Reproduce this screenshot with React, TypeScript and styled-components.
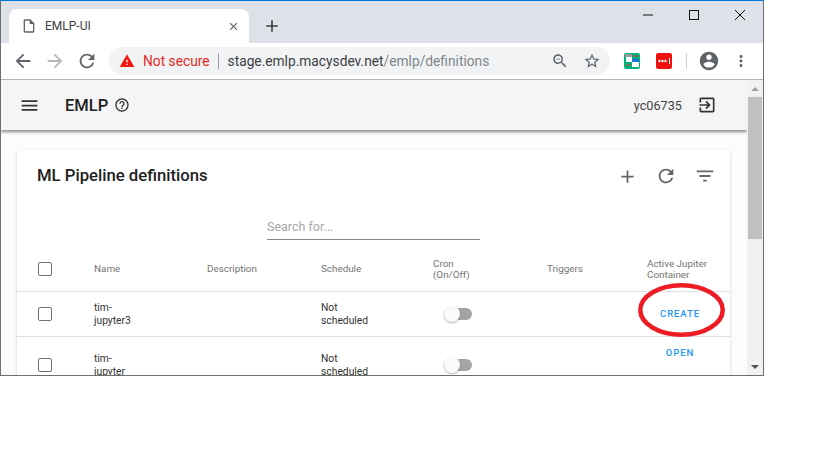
import * as React from 'react';
import styled, { createGlobalStyle } from 'styled-components';

const GlobalStyle = createGlobalStyle`
    html, body {
        margin: 0;
        padding: 0;
        background: #ffffff;
        font-family: Roboto, "Liberation Sans", sans-serif;
    }
`;

const Window = styled.div`
    width: 764px;
    height: 376px;
    box-sizing: border-box;
    display: flex;
    flex-direction: column;
    overflow: hidden;
    border-top: 1px solid #0078d7;
    border-left: 1px solid #6e6e6e;
    border-right: 1px solid #6e6e6e;
    border-bottom: 1px solid #6e6e6e;
`;

const TabStrip = styled.div`
    height: 42px;
    flex: none;
    display: flex;
    align-items: flex-end;
    background: #dee1e7;
    padding-left: 8px;
`;

const Tab = styled.div`
    width: 240px;
    height: 34px;
    box-sizing: border-box;
    display: flex;
    align-items: center;
    padding: 0 9px 0 12px;
    background: #ffffff;
    border-radius: 8px 8px 0 0;
`;

const TabTitle = styled.span`
    flex: 1;
    margin-left: 8px;
    font-size: 12px;
    color: #3c4043;
`;

const NewTab = styled.div`
    display: flex;
    height: 34px;
    align-items: center;
    margin-left: 13px;
`;

const WindowControls = styled.div`
    margin-left: auto;
    height: 100%;
    display: flex;
    align-items: flex-start;
    gap: 26px;
    padding: 5px 13px 0 0;
    box-sizing: border-box;
`;

const Toolbar = styled.div`
    height: 36px;
    flex: none;
    display: flex;
    align-items: center;
    background: #ffffff;
    border-bottom: 1px solid #b4b4b4;
    box-sizing: content-box;
    padding-left: 11px;
`;

const NavButtons = styled.div`
    display: flex;
    align-items: center;
    gap: 10px;
`;

const Omnibox = styled.div`
    width: 501px;
    height: 28px;
    margin-left: 11px;
    box-sizing: border-box;
    display: flex;
    align-items: center;
    padding: 0 9px 0 10px;
    border-radius: 14px;
    background: #f1f3f4;
    font-size: 13.75px;
`;

const NotSecure = styled.span`
    margin-left: 8px;
    color: #e8281f;
`;

const OmniDivider = styled.span`
    width: 1px;
    height: 16px;
    margin: 0 9px 0 8px;
    background: #9aa0a6;
`;

const UrlHost = styled.span`
    color: #3c4043;
`;

const UrlPath = styled.span`
    flex: 1;
    color: #80868b;
`;

const OmniActions = styled.div`
    display: flex;
    align-items: center;
    gap: 14px;
`;

const Extensions = styled.div`
    display: flex;
    align-items: center;
    margin-left: 14px;
    gap: 16px;
`;

const ExtensionBadge = styled.div<{ $bg: string }>`
    width: 16px;
    height: 16px;
    border-radius: 2px;
    background: ${p => p.$bg};
    display: flex;
`;

const ToolbarDivider = styled.span`
    width: 1px;
    height: 16px;
    margin: 0 11px 0 14px;
    background: #d0d0d0;
`;

const MoreSlot = styled.div`
    display: flex;
    margin-left: 12px;
`;

const Body = styled.div`
    flex: 1;
    min-height: 0;
    display: flex;
`;

const Main = styled.div`
    flex: 1;
    min-width: 0;
    overflow: hidden;
    background: #fcfcfc;
`;

const AppBar = styled.div`
    height: 50px;
    display: flex;
    align-items: center;
    padding: 0 30px 0 18px;
    background: #f5f5f5;
    box-shadow: 0 2px 3px rgba(0, 0, 0, 0.45);
`;

const AppTitle = styled.span`
    margin-left: 25px;
    font-size: 16.5px;
    font-weight: 500;
    color: #212121;
`;

const HelpSlot = styled.span`
    display: flex;
    margin-left: 6px;
`;

const UserName = styled.span`
    margin-left: auto;
    margin-right: 15px;
    font-size: 12.7px;
    color: #424242;
`;

const Card = styled.div`
    margin: 20px 17px 0 16px;
    background: #ffffff;
    border-radius: 3px;
    box-shadow: 0 1px 3px rgba(0, 0, 0, 0.2);
`;

const CardHeader = styled.div`
    height: 52px;
    display: flex;
    align-items: center;
    padding: 0 14px 0 20px;
    box-sizing: border-box;
`;

const CardTitle = styled.h2`
    margin: 0 0 1px 0;
    flex: 1;
    font-size: 16.7px;
    font-weight: 500;
    color: #212121;
`;

const CardActions = styled.div`
    display: flex;
    align-items: center;
    gap: 17px;
`;

const SearchRow = styled.div`
    display: flex;
    justify-content: center;
    padding: 13px 0 6px 0;
`;

const SearchInput = styled.input`
    width: 213px;
    height: 25px;
    box-sizing: border-box;
    padding: 0 0 2px 0;
    border: none;
    border-bottom: 1px solid #8a8a8a;
    background: transparent;
    outline: none;
    font-family: inherit;
    font-size: 12.5px;
    color: #333333;
    &::placeholder {
        color: #a8a8a8;
        opacity: 1;
    }
`;

const Row = styled.div<{ $height: number }>`
    height: ${p => p.$height}px;
    box-sizing: border-box;
    display: grid;
    grid-template-columns: 77px 113px 114px 112px 114px 100px 83px;
    align-items: center;
    border-bottom: 1px solid #e0e0e0;
    font-size: 10.3px;
    line-height: 13px;
`;

const HeadCell = styled.div`
    color: #757575;
    font-size: 9.85px;
    line-height: 11px;
`;

const Cell = styled.div`
    color: #333333;
`;

const CheckCell = styled.div`
    padding-left: 21px;
    display: flex;
`;

const CheckBox = styled.span`
    width: 14px;
    height: 14px;
    box-sizing: border-box;
    display: block;
    border: 1.5px solid #6f6f6f;
    border-radius: 2px;
`;

const ToggleCell = styled.div`
    padding-left: 11px;
    display: flex;
`;

const Track = styled.span`
    width: 28px;
    height: 12px;
    position: relative;
    display: block;
    border-radius: 6px;
    background: #a4a4a4;
`;

const Thumb = styled.span`
    position: absolute;
    left: 0;
    top: -2px;
    width: 16px;
    height: 16px;
    border-radius: 50%;
    background: #fafafa;
    box-shadow: 0 1px 2px rgba(0, 0, 0, 0.3);
`;

const ActionCell = styled.div<{ $top: boolean }>`
    position: relative;
    align-self: ${p => (p.$top ? 'start' : 'center')};
    margin-top: ${p => (p.$top ? '9px' : '-1px')};
    text-align: center;
    padding-right: 17px;
`;

const ActionButton = styled.span`
    font-size: 9.5px;
    font-weight: 500;
    letter-spacing: 0.9px;
    color: #2196f3;
`;

const Scribble = styled.svg`
    position: absolute;
    left: -9px;
    top: -24px;
`;

const Scrollbar = styled.div`
    width: 16px;
    flex: none;
    display: flex;
    flex-direction: column;
    align-items: center;
    background: #f1f1f1;
`;

const ScrollArrow = styled.div<{ $down?: boolean }>`
    height: 17px;
    display: flex;
    align-items: center;
    justify-content: center;
    margin-top: ${p => (p.$down ? 'auto' : '0')};
`;

const Arrow = styled.span<{ $down?: boolean }>`
    width: 0;
    height: 0;
    border-left: 4px solid transparent;
    border-right: 4px solid transparent;
    border-${p => (p.$down ? 'top' : 'bottom')}: 4px solid ${p => (p.$down ? '#505050' : '#a3a3a3')};
`;

const ScrollThumb = styled.div`
    width: 14px;
    height: 142px;
    background: #c1c1c1;
`;

const Icon = function (props: { d: string; size: number; color: string })
{
    return (
        <svg width={props.size} height={props.size} viewBox="0 0 24 24" fill={props.color} style={{ display: 'block', flex: 'none' }}>
            <path d={props.d} />
        </svg>
    );
};

const paths = {
    back: 'M20 11H7.83l5.59-5.59L12 4l-8 8 8 8 1.41-1.41L7.83 13H20v-2z',
    forward: 'M12 4l-1.41 1.41L16.17 11H4v2h12.17l-5.58 5.59L12 20l8-8z',
    refresh: 'M17.65 6.35C16.2 4.9 14.21 4 12 4c-4.42 0-7.99 3.58-7.99 8s3.57 8 7.99 8c3.73 0 6.84-2.55 7.73-6h-2.08c-.82 2.33-3.04 4-5.65 4-3.31 0-6-2.69-6-6s2.69-6 6-6c1.66 0 3.14.69 4.22 1.78L13 11h7V4l-2.35 2.35z',
    file: 'M14 2H6c-1.1 0-2 .9-2 2v16c0 1.1.9 2 2 2h12c1.1 0 2-.9 2-2V8l-6-6zm4 18H6V4h7v5h5v11z',
    close: 'M19 6.41L17.59 5 12 10.59 6.41 5 5 6.41 10.59 12 5 17.59 6.41 19 12 13.41 17.59 19 19 17.59 13.41 12z',
    add: 'M19 13h-6v6h-2v-6H5v-2h6V5h2v6h6v2z',
    zoomOut: 'M15.5 14h-.79l-.28-.27C15.41 12.59 16 11.11 16 9.5 16 5.91 13.09 3 9.5 3S3 5.91 3 9.5 5.91 16 9.5 16c1.61 0 3.09-.59 4.23-1.57l.27.28v.79l5 4.99L20.49 19l-4.99-5zm-6 0C7.01 14 5 11.99 5 9.5S7.01 5 9.5 5 14 7.01 14 9.5 11.99 14 9.5 14zM7 9h5v1H7z',
    star: 'M22 9.24l-7.19-.62L12 2 9.19 8.63 2 9.24l5.46 4.73L5.82 21 12 17.27 18.18 21l-1.63-7.03L22 9.24zM12 15.4l-3.76 2.27 1-4.28-3.32-2.88 4.38-.38L12 6.1l1.71 4.04 4.38.38-3.32 2.88 1 4.28L12 15.4z',
    account: 'M12 2C6.48 2 2 6.48 2 12s4.48 10 10 10 10-4.48 10-10S17.52 2 12 2zm0 3c1.66 0 3 1.34 3 3s-1.34 3-3 3-3-1.34-3-3 1.34-3 3-3zm0 14.2c-2.5 0-4.71-1.28-6-3.22.03-1.99 4-3.08 6-3.08 1.99 0 5.97 1.09 6 3.08-1.29 1.94-3.5 3.22-6 3.22z',
    more: 'M12 8c1.1 0 2-.9 2-2s-.9-2-2-2-2 .9-2 2 .9 2 2 2zm0 2c-1.1 0-2 .9-2 2s.9 2 2 2 2-.9 2-2-.9-2-2-2zm0 6c-1.1 0-2 .9-2 2s.9 2 2 2 2-.9 2-2-.9-2-2-2z',
    menu: 'M3 18h18v-2H3v2zm0-5h18v-2H3v2zm0-7v2h18V6H3z',
    help: 'M11 18h2v-2h-2v2zm1-16C6.48 2 2 6.48 2 12s4.48 10 10 10 10-4.48 10-10S17.52 2 12 2zm0 18c-4.41 0-8-3.59-8-8s3.59-8 8-8 8 3.59 8 8-3.59 8-8 8zm0-14c-2.21 0-4 1.79-4 4h2c0-1.1.9-2 2-2s2 .9 2 2c0 2-3 1.75-3 5h2c0-2.25 3-2.5 3-5 0-2.21-1.79-4-4-4z',
    exit: 'M10.09 15.59L11.5 17l5-5-5-5-1.41 1.41L12.67 11H3v2h9.67l-2.58 2.59zM19 3H5c-1.11 0-2 .9-2 2v4h2V5h14v14H5v-4H3v4c0 1.1.89 2 2 2h14c1.1 0 2-.9 2-2V5c0-1.1-.9-2-2-2z',
    filter: 'M10 18h4v-2h-4v2zM3 6v2h18V6H3zm3 7h12v-2H6v2z',
};

const WarningIcon = function ()
{
    return (
        <svg width="16" height="16" viewBox="0 0 24 24" style={{ display: 'block', flex: 'none' }}>
            <path d="M1 21h22L12 2 1 21z" fill="#f0190f" />
            <path d="M13 18h-2v-2h2v2zm0-4h-2v-4h2v4z" fill="#ffffff" />
        </svg>
    );
};

const SwitchExtension = function ()
{
    return (
        <svg width="16" height="16" viewBox="0 0 16 16" style={{ display: 'block' }}>
            <rect x="1" y="1" width="7" height="3" fill="#9e9e9e" />
            <rect x="2" y="4" width="6" height="5" fill="#ffffff" />
            <rect x="8" y="6" width="7" height="3" fill="#1976d2" />
            <rect x="8" y="9" width="7" height="5" fill="#ffffff" />
            <path d="M9 3h5M2 12h5" stroke="#e53935" strokeWidth="1" />
        </svg>
    );
};

const DotsExtension = function ()
{
    return (
        <svg width="16" height="16" viewBox="0 0 16 16" style={{ display: 'block' }}>
            <circle cx="3.5" cy="8" r="1.2" fill="#ffffff" />
            <circle cx="6.5" cy="8" r="1.2" fill="#ffffff" />
            <circle cx="9.5" cy="8" r="1.2" fill="#ffffff" />
            <rect x="13" y="5" width="1" height="6" fill="#ffffff" />
        </svg>
    );
};

const rows = [
    { name: ['tim-', 'jupyter3'], action: 'CREATE', height: 45, circled: true },
    { name: ['tim-', 'jupyter'], action: 'OPEN', height: 57, circled: false },
];

export default function App()
{
    return (<>
        <GlobalStyle />
        <Window>
            <TabStrip>
                <Tab>
                    <Icon d={paths.file} size={16} color="#5f6368" />
                    <TabTitle>EMLP-UI</TabTitle>
                    <Icon d={paths.close} size={13} color="#5f6368" />
                </Tab>
                <NewTab><Icon d={paths.add} size={20} color="#3c4043" /></NewTab>
                <WindowControls>
                    <svg width="20" height="18" viewBox="0 0 20 18"><path d="M5 9h10" stroke="#111" /></svg>
                    <svg width="20" height="18" viewBox="0 0 20 18"><rect x="5.5" y="4.5" width="9" height="9" fill="none" stroke="#111" /></svg>
                    <svg width="20" height="18" viewBox="0 0 20 18"><path d="M5 4l10 10M15 4L5 14" stroke="#111" /></svg>
                </WindowControls>
            </TabStrip>
            <Toolbar>
                <NavButtons>
                    <Icon d={paths.back} size={22} color="#5f6368" />
                    <Icon d={paths.forward} size={22} color="#b4b7bb" />
                    <Icon d={paths.refresh} size={22} color="#5f6368" />
                </NavButtons>
                <Omnibox>
                    <WarningIcon />
                    <NotSecure>Not secure</NotSecure>
                    <OmniDivider />
                    <UrlHost>stage.emlp.macysdev.net</UrlHost>
                    <UrlPath>/emlp/definitions</UrlPath>
                    <OmniActions>
                        <Icon d={paths.zoomOut} size={18} color="#5f6368" />
                        <Icon d={paths.star} size={18} color="#5f6368" />
                    </OmniActions>
                </Omnibox>
                <Extensions>
                    <ExtensionBadge $bg="#00b07a"><SwitchExtension /></ExtensionBadge>
                    <ExtensionBadge $bg="#ee0f0f"><DotsExtension /></ExtensionBadge>
                </Extensions>
                <ToolbarDivider />
                <Icon d={paths.account} size={22} color="#5f6368" />
                <MoreSlot><Icon d={paths.more} size={18} color="#5f6368" /></MoreSlot>
            </Toolbar>
            <Body>
                <Main>
                    <AppBar>
                        <Icon d={paths.menu} size={21} color="#333333" />
                        <AppTitle>EMLP</AppTitle>
                        <HelpSlot><Icon d={paths.help} size={16} color="#333333" /></HelpSlot>
                        <UserName>yc06735</UserName>
                        <Icon d={paths.exit} size={20} color="#333333" />
                    </AppBar>
                    <Card>
                        <CardHeader>
                            <CardTitle>ML Pipeline definitions</CardTitle>
                            <CardActions>
                                <Icon d={paths.add} size={21} color="#666666" />
                                <Icon d={paths.refresh} size={22} color="#666666" />
                                <Icon d={paths.filter} size={22} color="#666666" />
                            </CardActions>
                        </CardHeader>
                        <SearchRow>
                            <SearchInput placeholder="Search for..." readOnly />
                        </SearchRow>
                        <Row $height={46}>
                            <CheckCell><CheckBox /></CheckCell>
                            <HeadCell>Name</HeadCell>
                            <HeadCell>Description</HeadCell>
                            <HeadCell>Schedule</HeadCell>
                            <HeadCell>Cron<br />(On/Off)</HeadCell>
                            <HeadCell>Triggers</HeadCell>
                            <HeadCell>Active Jupiter Container</HeadCell>
                        </Row>
                        {rows.map(row => (
                            <Row $height={row.height} key={row.action}>
                                <CheckCell><CheckBox /></CheckCell>
                                <Cell>{row.name[0]}<br />{row.name[1]}</Cell>
                                <Cell />
                                <Cell>Not<br />scheduled</Cell>
                                <ToggleCell><Track><Thumb /></Track></ToggleCell>
                                <Cell />
                                <ActionCell $top={!row.circled}>
                                    <ActionButton>{row.action}</ActionButton>
                                    {row.circled && (
                                        <Scribble width="87" height="54" viewBox="0 0 87 54">
                                            <ellipse cx="43.5" cy="27" rx="41.2" ry="24.7" fill="none" stroke="#ee1c25" strokeWidth="4.5" />
                                        </Scribble>
                                    )}
                                </ActionCell>
                            </Row>
                        ))}
                    </Card>
                </Main>
                <Scrollbar>
                    <ScrollArrow><Arrow /></ScrollArrow>
                    <ScrollThumb />
                    <ScrollArrow $down><Arrow $down /></ScrollArrow>
                </Scrollbar>
            </Body>
        </Window>
    </>);
}
